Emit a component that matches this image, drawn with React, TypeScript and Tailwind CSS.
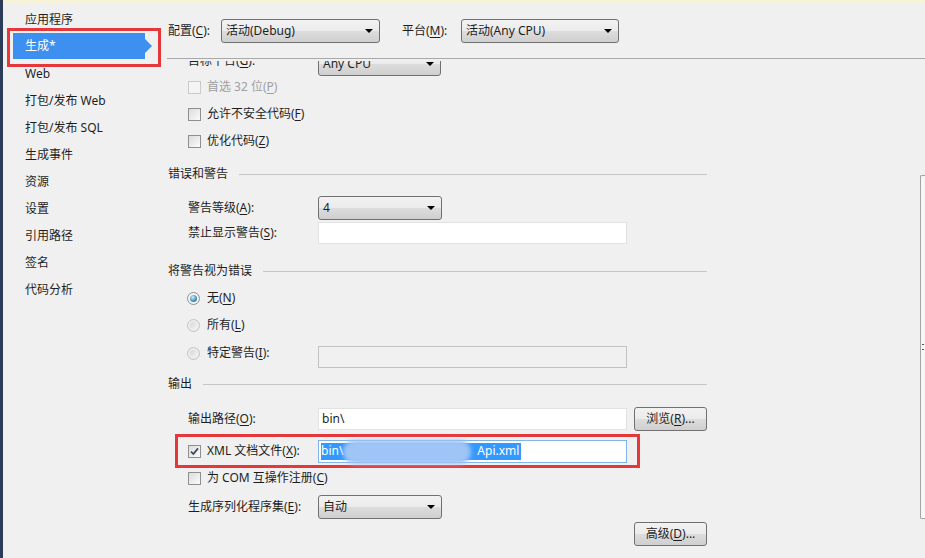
import React from "react";

const navItems = ["应用程序", "生成*", "Web", "打包/发布 Web", "打包/发布 SQL", "生成事件", "资源", "设置", "引用路径", "签名", "代码分析"];

function U({ children }: { children: React.ReactNode }) {
  return <span className="underline underline-offset-[2px]">{children}</span>;
}

function Checkbox({ checked = false, disabled = false }: { checked?: boolean; disabled?: boolean }) {
  return (
    <span
      className={`flex h-[13px] w-[13px] shrink-0 items-center justify-center border ${
        disabled ? "border-[#cacaca] bg-[#f4f4f4]" : "border-[#8e8f8f] bg-[linear-gradient(135deg,#dcdcdc,#fbfbfb)]"
      }`}
    >
      {checked && (
        <svg width="9" height="9" viewBox="0 0 9 9">
          <path d="M1 4.6 L3.4 7 L8 1.4" fill="none" stroke="#3a4656" strokeWidth="1.7" />
        </svg>
      )}
    </span>
  );
}

function Radio({ checked = false }: { checked?: boolean }) {
  return (
    <span className={`flex h-[13px] w-[13px] shrink-0 items-center justify-center rounded-full border ${checked ? "border-[#8e8f8f] bg-[#f4f4f4]" : "border-[#c4c4c4] bg-[#ececec]"}`}>
      <span
        className={`h-[7px] w-[7px] rounded-full ${
          checked ? "bg-[radial-gradient(circle_at_40%_35%,#c8f2ff,#2b7db0_70%)]" : "bg-[linear-gradient(135deg,#d6d6d6,#f3f3f3)]"
        }`}
      />
    </span>
  );
}

function Select({ value, w }: { value: string; w: string }) {
  return (
    <div
      className={`flex h-[24px] ${w} shrink-0 items-center justify-between rounded-[3px] border border-[#707070] bg-[linear-gradient(to_bottom,#f2f2f2_0%,#ebebeb_50%,#dddddd_50%,#cfcfcf_100%)] pl-[4px] pr-[6px]`}
    >
      <span className="leading-[16px]">{value}</span>
      <span className="h-0 w-0 border-x-[4px] border-t-[4px] border-x-transparent border-t-black" />
    </div>
  );
}

function Btn({ children }: { children: React.ReactNode }) {
  return (
    <div className="flex h-[24px] w-[73px] items-center justify-center rounded-[3px] border border-[#707070] bg-[linear-gradient(to_bottom,#f2f2f2_0%,#ebebeb_50%,#dddddd_50%,#cfcfcf_100%)]">
      {children}
    </div>
  );
}

function Header({ title, className }: { title: string; className: string }) {
  return (
    <div className={`flex h-[20px] w-[540px] items-center gap-[11px] pl-[1px] ${className}`}>
      <span>{title}</span>
      <span className="h-px flex-1 bg-[#c6c6c6]" />
    </div>
  );
}

export default function App() {
  return (
    <div className="flex h-[558px] w-[925px] overflow-hidden bg-[#f0f0f0] font-['Noto_Sans','Noto_Sans_CJK_SC',sans-serif] text-[12px] leading-[16px] text-[#1e1e1e]">
      <div className="w-[3px] shrink-0 bg-[#2c3b57]" />
      <div className="flex min-w-0 flex-1 flex-col">
        <div className="h-[3px] bg-[#f6f3d8]" />
        <div className="flex min-h-0 flex-1">
          {/* side nav */}
          <nav className="relative w-[164px] shrink-0 pt-[3px]">
            {navItems.map((item, i) =>
              i === 1 ? (
                <div key={item} className="flex h-[27px] items-start">
                  <div className="ml-[10px] flex h-[26px] w-[132px] items-center bg-[#3d90f0] pl-[12px] text-white">{item}</div>
                  <span className="mt-[6px] h-0 w-0 border-y-[7px] border-l-[7px] border-y-transparent border-l-[#3d90f0]" />
                </div>
              ) : (
                <div key={item} className="flex h-[27px] items-center pl-[22px]">
                  {item}
                </div>
              )
            )}
            <div className="absolute left-[4px] top-[25px] h-[39px] w-[154px] border-[3px] border-[#e5383b]" />
          </nav>

          <main className="flex min-w-0 flex-1 flex-col">
            {/* toolbar */}
            <div className="flex h-[56px] shrink-0 items-center border-b border-[#a9a9a9] pl-[1px]">
              <span className="w-[53px]">
                配置(<U>C</U>):
              </span>
              <Select value="活动(Debug)" w="w-[159px]" />
              <span className="ml-[22px] w-[59px]">
                平台(<U>M</U>):
              </span>
              <Select value="活动(Any CPU)" w="w-[158px]" />
            </div>

            {/* scrolled property page */}
            <div className="relative mt-[2px] min-h-0 flex-1 overflow-hidden">
              <div className="flex flex-col">
                <div className="-mt-[9px] flex h-[24px] items-center pl-[21px]">
                  <span className="mb-[6px] w-[130px]">
                    目标平台(<U>G</U>):
                  </span>
                  <Select value="Any CPU" w="w-[123px]" />
                </div>
                <div className="flex h-[22px] items-center gap-[6px] pl-[21px] text-[#a0a0a0]">
                  <Checkbox disabled />
                  <span>
                    首选 32 位(<U>P</U>)
                  </span>
                </div>
                <div className="mt-[5px] flex h-[22px] items-center gap-[6px] pl-[21px]">
                  <Checkbox />
                  <span>
                    允许不安全代码(<U>F</U>)
                  </span>
                </div>
                <div className="mt-[5px] flex h-[22px] items-center gap-[6px] pl-[21px]">
                  <Checkbox />
                  <span>
                    优化代码(<U>Z</U>)
                  </span>
                </div>

                <Header title="错误和警告" className="mt-[12px]" />
                <div className="mt-[12px] flex h-[24px] items-center pl-[21px]">
                  <span className="w-[130px]">
                    警告等级(<U>A</U>):
                  </span>
                  <Select value="4" w="w-[124px]" />
                </div>
                <div className="mt-[2px] flex h-[22px] items-center pl-[21px]">
                  <span className="w-[130px]">
                    禁止显示警告(<U>S</U>):
                  </span>
                  <div className="h-[22px] w-[309px] border border-[#e2e2e2] bg-white" />
                </div>

                <Header title="将警告视为错误" className="mt-[17px]" />
                <div className="mt-[6px] flex h-[22px] items-center gap-[7px] pl-[20px]">
                  <Radio checked />
                  <span>
                    无(<U>N</U>)
                  </span>
                </div>
                <div className="mt-[5px] flex h-[22px] items-center gap-[7px] pl-[20px]">
                  <Radio />
                  <span>
                    所有(<U>L</U>)
                  </span>
                </div>
                <div className="mt-[10px] flex h-[22px] items-center pl-[20px]">
                  <div className="mb-[8px] flex w-[131px] items-center gap-[7px]">
                    <Radio />
                    <span>
                      特定警告(<U>I</U>):
                    </span>
                  </div>
                  <div className="h-[22px] w-[309px] border border-[#c2c2c2] bg-[#f0f0f0]" />
                </div>

                <Header title="输出" className="mt-[6px]" />
                <div className="mt-[13px] flex h-[24px] w-[540px] items-center pl-[21px]">
                  <span className="w-[130px]">
                    输出路径(<U>O</U>):
                  </span>
                  <div className="flex h-[22px] w-[309px] items-center border border-[#e2e2e2] bg-white pl-[3px]">bin\</div>
                  <div className="ml-auto">
                    <Btn>
                      浏览(<U>R</U>)...
                    </Btn>
                  </div>
                </div>
                <div className="ml-[8px] mt-[3px] flex h-[34px] w-[465px] items-center border-[3px] border-[#e5383b] pl-[10px]">
                  <div className="flex w-[130px] items-center gap-[6px]">
                    <Checkbox checked />
                    <span>
                      XML 文档文件(<U>X</U>):
                    </span>
                  </div>
                  <div className="flex h-[23px] w-[309px] items-center border border-[#7eb4ea] bg-white pl-[2px]">
                    <span className="relative flex h-[17px] items-center bg-[#3399ff] pr-[2px] text-white">
                      <span>bin\</span>
                      <span className="w-[134px]" />
                      <span>Api.xml</span>
                      <span className="absolute left-[22px] top-[-3px] h-[24px] w-[128px] rounded-full bg-[#9fc4f6] blur-[2px]" />
                    </span>
                  </div>
                </div>
                <div className="flex h-[20px] items-center gap-[6px] pl-[21px]">
                  <Checkbox />
                  <span>
                    为 COM 互操作注册(<U>C</U>)
                  </span>
                </div>
                <div className="mt-[7px] flex h-[24px] items-center pl-[21px]">
                  <span className="w-[130px]">
                    生成序列化程序集(<U>E</U>):
                  </span>
                  <Select value="自动" w="w-[124px]" />
                </div>
                <div className="mt-[3px] flex w-[540px] justify-end">
                  <Btn>
                    高级(<U>D</U>)...
                  </Btn>
                </div>
              </div>

              {/* page scrollbar edge */}
              <div className="absolute right-0 top-[114px] flex h-[344px] w-[5px] items-center rounded-l-[2px] border-y border-l border-[#a3a3a3] bg-[#f7f7f7]">
                <span className="ml-[1px] h-[6px] w-[2px] border-y border-[#555]" />
              </div>
            </div>
          </main>
        </div>
      </div>
    </div>
  );
}
